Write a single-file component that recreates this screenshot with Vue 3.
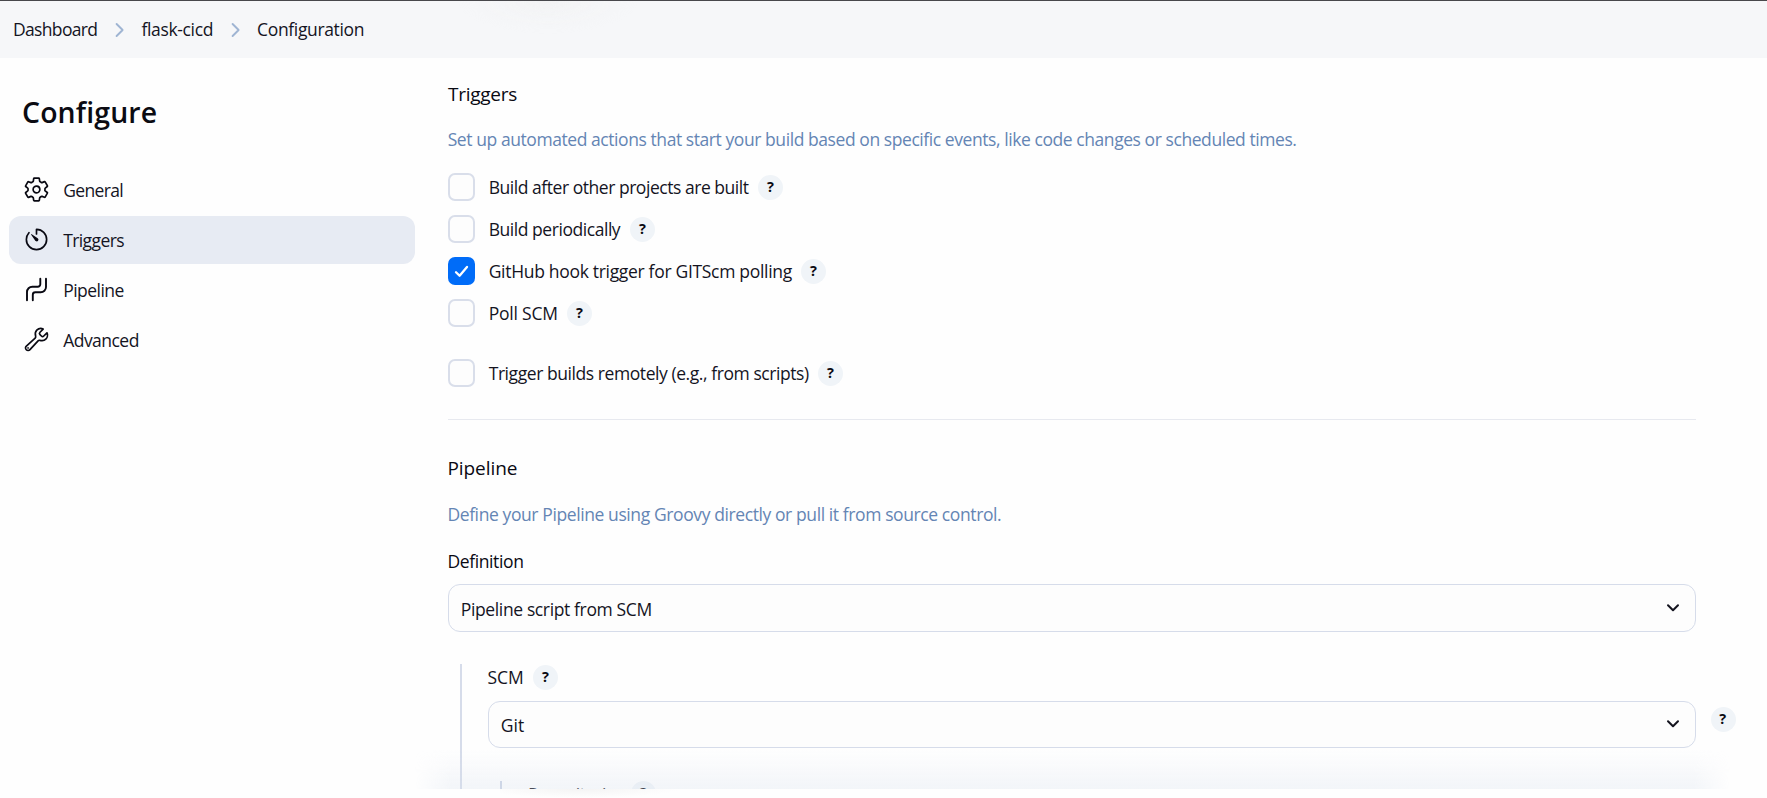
<script setup>
// Letter tracking (px) is kept beside each label so that widths stay tuned per string.
const crumbs = [
  { text: 'Dashboard', ls: -0.66 },
  { text: 'flask-cicd', ls: -0.34 },
  { text: 'Configuration', ls: -0.35 },
]

const nav = [
  { text: 'General', icon: 'gear', ls: -0.65 },
  { text: 'Triggers', icon: 'timer', ls: -0.6, active: true },
  { text: 'Pipeline', icon: 'pipe', ls: -0.54 },
  { text: 'Advanced', icon: 'wrench', ls: -0.53 },
]

const triggers = [
  { text: 'Build after other projects are built', ls: -0.46, w: 269.3 },
  { text: 'Build periodically', ls: -0.45, w: 141.3 },
  { text: 'GitHub hook trigger for GITScm polling', ls: -0.31, w: 312.3, checked: true },
  { text: 'Poll SCM', ls: -0.2, w: 78.3 },
  { text: 'Trigger builds remotely (e.g., from scripts)', ls: -0.43, w: 329.3, spaced: true },
]

const track = (ls) => ({ letterSpacing: ls + 'px' })
</script>

<template>
  <div class="page">
    <header class="crumbs">
      <template v-for="(c, i) in crumbs" :key="c.text">
        <a class="crumb" :style="track(c.ls)">{{ c.text }}</a>
        <svg v-if="i < crumbs.length - 1" class="sep" viewBox="0 0 10 16">
          <path d="M1.6 2l6 6-6 6" />
        </svg>
      </template>
    </header>

    <div class="body">
      <aside class="side">
        <h1>Configure</h1>
        <nav>
          <a v-for="n in nav" :key="n.text" class="item" :class="{ active: n.active }">
            <svg v-if="n.icon === 'gear'" class="ico" viewBox="0 0 512 512">
              <path d="M262.29 192.31a64 64 0 1057.4 57.4 64.13 64.13 0 00-57.4-57.4zM416.39 256a154.34 154.34 0 01-1.53 20.79l45.21 35.46a10.81 10.81 0 012.45 13.75l-42.77 74a10.81 10.81 0 01-13.14 4.59l-44.9-18.08a16.11 16.11 0 00-15.17 1.75A164.48 164.48 0 01325 400.8a15.94 15.94 0 00-8.82 12.14l-6.73 47.89a11.08 11.08 0 01-10.68 9.17h-85.54a11.11 11.11 0 01-10.69-8.87l-6.72-47.82a16.07 16.07 0 00-9-12.22 155.3 155.3 0 01-21.46-12.57 16 16 0 00-15.11-1.71l-44.89 18.07a10.81 10.81 0 01-13.14-4.58l-42.77-74a10.8 10.8 0 012.45-13.75l38.21-30a16.05 16.05 0 006-14.08c-.36-4.17-.58-8.33-.58-12.5s.21-8.27.58-12.35a16 16 0 00-6.07-13.94l-38.19-30A10.81 10.81 0 0149.48 186l42.77-74a10.81 10.81 0 0113.14-4.59l44.9 18.08a16.11 16.11 0 0015.17-1.75A164.48 164.48 0 01187 111.2a15.94 15.94 0 008.82-12.14l6.73-47.89A11.08 11.08 0 01213.23 42h85.54a11.11 11.11 0 0110.69 8.87l6.72 47.82a16.07 16.07 0 009 12.22 155.3 155.3 0 0121.46 12.57 16 16 0 0015.11 1.71l44.89-18.07a10.81 10.81 0 0113.14 4.58l42.77 74a10.8 10.8 0 01-2.45 13.75l-38.21 30a16.05 16.05 0 00-6.05 14.08c.33 4.14.55 8.3.55 12.47z" />
            </svg>
            <svg v-else-if="n.icon === 'timer'" class="ico" viewBox="0 0 512 512">
              <path d="M112.91 128A191.85 191.85 0 0064 254c-1.18 106.35 85.65 193.8 192 194 106.2.2 192-85.83 192-192 0-104.54-83.55-189.61-187.5-192a4.36 4.36 0 00-4.5 4.37V152" />
              <path class="solid" d="M233.38 278.63l-79-113a8.13 8.13 0 0111.32-11.32l113 79a32.5 32.5 0 01-37.25 53.26 33.21 33.21 0 01-8.07-7.94z" />
            </svg>
            <svg v-else-if="n.icon === 'pipe'" class="ico pipe" viewBox="0 0 27 27">
              <path d="M4 24.2V16a5.3 5.3 0 0 1 5.3-5.3h5.5a2.5 2.5 0 0 0 2.5-2.5V2.8M9.8 24.2v-5.4a2.5 2.5 0 0 1 2.5-2.5h5.4A5.3 5.3 0 0 0 23 11V2.8" />
            </svg>
            <svg v-else class="ico" viewBox="0 0 512 512">
              <path d="M393.87 190a32.1 32.1 0 01-45.25 0l-26.57-26.57a32.09 32.09 0 010-45.26L382.19 58a1 1 0 00-.3-1.64c-38.82-16.64-89.15-8.16-121.11 23.57-30.58 30.35-32.32 76-21.12 115.84a31.93 31.93 0 01-9.06 32.08L64 380a48.17 48.17 0 1068 68l153.86-167a31.93 31.93 0 0131.6-9.13c39.54 10.59 84.54 8.6 114.72-21.19 32.49-32 39.5-88.56 23.75-120.93a1 1 0 00-1.6-.26z" />
              <circle class="solid" cx="96" cy="416" r="16" />
            </svg>
            <span :style="track(n.ls)">{{ n.text }}</span>
          </a>
        </nav>
      </aside>

      <main class="main">
        <section>
          <h2 class="h-triggers">Triggers</h2>
          <p class="desc d-triggers">Set up automated actions that start your build based on specific events, like code changes or scheduled times.</p>
          <div class="checks">
            <div v-for="t in triggers" :key="t.text" class="check" :class="{ spaced: t.spaced }">
              <span class="box" :class="{ on: t.checked }">
                <svg v-if="t.checked" viewBox="0 0 27 28"><path d="M8 15.2l3.6 3.6L19 10" /></svg>
              </span>
              <span class="label" :style="{ letterSpacing: t.ls + 'px', width: t.w + 'px' }">{{ t.text }}</span>
              <span class="help">?</span>
            </div>
          </div>
        </section>

        <section class="pipeline">
          <h2 class="h-pipeline">Pipeline</h2>
          <p class="desc d-pipeline">Define your Pipeline using Groovy directly or pull it from source control.</p>
          <div class="definition">Definition</div>
          <div class="select">
            <span class="val-script">Pipeline script from SCM</span>
            <svg class="caret" viewBox="0 0 14 10"><path d="M2 2.2l5 5 5-5" /></svg>
          </div>
          <div class="nested">
            <div class="row"><span class="scm">SCM</span><span class="help">?</span></div>
            <div class="select short">
              <span>Git</span>
              <svg class="caret" viewBox="0 0 14 10"><path d="M2 2.2l5 5 5-5" /></svg>
              <span class="help outer">?</span>
            </div>
            <div class="nested inner">
              <div class="row"><span class="repos">Repositories</span><span class="help">?</span></div>
            </div>
          </div>
        </section>
      </main>
    </div>
    <div class="fade"></div>
    <div class="glow top"></div>
    <div class="glow bottom"></div>
  </div>
</template>

<style>
body {
  background: #fff;
}
</style>

<style scoped>
* {
  box-sizing: border-box;
}
.page {
  position: relative;
  width: 1767px;
  height: 798px;
  overflow: hidden;
  display: flex;
  flex-direction: column;
  background: #fefefe;
  color: #14141f;
  font: 17.5px/24px "Open Sans", "Noto Sans", sans-serif;
  white-space: nowrap;
}
h1,
h2,
p {
  margin: 0;
}
svg {
  fill: none;
  stroke: currentColor;
  stroke-linecap: round;
  stroke-linejoin: round;
  display: block;
}
.crumbs {
  height: 58px;
  flex: none;
  display: flex;
  align-items: center;
  padding: 0 0 1px 13px;
  border-top: 1px solid #48484c;
  background: #f6f7f9;
}
.sep {
  width: 10px;
  height: 16px;
  stroke: #9fb5d3;
  stroke-width: 1.9;
  margin: 2px 16.5px 0 17.5px;
}
.body {
  flex: none;
  height: 731px;
  overflow: hidden;
  display: flex;
}
.side {
  width: 448px;
  flex: none;
  padding: 34px 33px 0 9px;
}
h1 {
  padding-left: 13px;
  font-size: 28.4px;
  line-height: 40px;
  font-weight: 600;
  letter-spacing: 0.15px;
  color: #0b0b12;
}
nav {
  display: flex;
  flex-direction: column;
  gap: 2px;
  margin-top: 34px;
}
.item {
  height: 48px;
  border-radius: 12px;
  display: flex;
  align-items: center;
  padding-left: 14px;
}
.item.active {
  background: #e7ebf3;
}
.item span {
  margin-left: 13.2px;
}
.ico {
  width: 27px;
  height: 27px;
  margin-bottom: 1px;
  stroke-width: 32;
  color: #090912;
}
.pipe {
  stroke-width: 1.9;
}
.solid {
  fill: currentColor;
  stroke: none;
}
.main {
  width: 1248px;
  flex: none;
  padding-top: 23.5px;
}
h2 {
  font-size: 19px;
  line-height: 24px;
  font-weight: 400;
  color: #090912;
}
.h-triggers {
  letter-spacing: -0.27px;
}
.h-pipeline {
  letter-spacing: -0.05px;
  margin-left: -0.6px;
}
.desc {
  color: #6485b4;
  margin-top: 21.5px;
}
.d-triggers {
  letter-spacing: -0.43px;
  margin-left: -0.3px;
}
.d-pipeline {
  letter-spacing: -0.4px;
  margin-left: -0.6px;
}
.checks {
  display: flex;
  flex-direction: column;
  gap: 14px;
  margin-top: 22px;
}
.check {
  display: flex;
  height: 28px;
}
.check.spaced {
  margin-top: 18px;
}
.box {
  width: 27px;
  height: 28px;
  border: 2px solid #d9deea;
  border-radius: 7px;
  background: #fdfdfd;
}
.box.on {
  border: 0;
  background: #006cf8;
}
.box svg {
  width: 27px;
  height: 28px;
  stroke: #fff;
  stroke-width: 2.3;
}
.label {
  line-height: 28px;
  margin-left: 13.7px;
}
.help {
  width: 25px;
  height: 25px;
  flex: none;
  border-radius: 50%;
  background: #f0f4f8;
  color: #0b0b12;
  font-size: 14.5px;
  line-height: 23.5px;
  font-weight: 700;
  letter-spacing: 0;
  text-align: center;
}
.check .help {
  margin-top: 2px;
}
.pipeline {
  margin-top: 32px;
  border-top: 1px solid #e7e9ef;
  padding-top: 36px;
}
.definition {
  margin: 23px 0 0 -0.6px;
  letter-spacing: -0.38px;
  color: #090912;
}
.select {
  position: relative;
  height: 48px;
  margin-top: 11.5px;
  border: 1px solid #d6dcea;
  border-radius: 12px;
  background: #fdfdfd;
  display: flex;
  align-items: center;
  justify-content: space-between;
  padding: 1px 15px 0 11.8px;
}
.val-script {
  letter-spacing: -0.37px;
}
.caret {
  width: 14px;
  height: 10px;
  stroke-width: 2;
  margin-top: -1px;
}
.nested {
  margin: 32px 0 0 12px;
  border-left: 2px solid #d6dcea;
  padding-left: 26px;
  height: 200px;
}
.row {
  display: flex;
  align-items: center;
  height: 26px;
  padding-top: 1px;
}
.row .scm {
  width: 45.5px;
  margin: -1px 0 0 -0.5px;
}
.select.short {
  height: 47px;
  margin-top: 11px;
  padding-top: 0;
}
.outer {
  position: absolute;
  right: -41px;
  top: 5px;
  padding-right: 1.5px;
}
.inner {
  margin-top: 33px;
  border-left-color: #ccd4e5;
}
.repos {
  width: 103px;
  letter-spacing: -0.5px;
}
.inner .row {
  height: 25px;
  padding-top: 0;
}
.fade {
  position: absolute;
  left: 415px;
  top: 750px;
  width: 1315px;
  height: 39px;
  background: linear-gradient(rgba(214, 223, 236, 0), rgba(214, 223, 236, 0.28));
  mask-image: linear-gradient(90deg, transparent, #000 36px, #000 calc(100% - 36px), transparent);
}
.glow {
  position: absolute;
}
.glow.top {
  left: 455px;
  top: 1px;
  width: 186px;
  height: 34px;
  background: radial-gradient(ellipse at 50% 0, rgba(240, 240, 240, 0.6), rgba(240, 240, 240, 0) 100%);
  mask-image: radial-gradient(ellipse at 50% 0, #000, transparent 70%);
}
.glow.bottom {
  left: 500px;
  top: 789px;
  width: 180px;
  height: 9px;
  background: radial-gradient(ellipse at 45% 0, #f4f4f4, rgba(244, 244, 244, 0) 70%);
}
</style>
